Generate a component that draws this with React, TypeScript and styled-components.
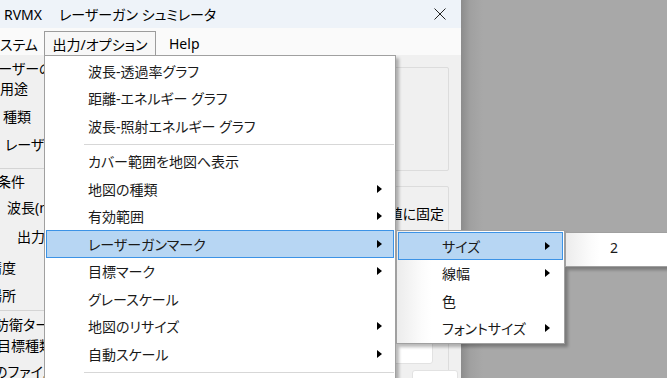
import styled, { createGlobalStyle } from "styled-components";

const GlobalStyle = createGlobalStyle`
  html, body {
    margin: 0;
    padding: 0;
  }
  body {
    font-family: "Noto Sans", "Noto Sans CJK JP", sans-serif;
    font-feature-settings: "palt";
    color: #1a1a1a;
  }
`;

const Screen = styled.div`
  position: relative;
  width: 667px;
  height: 378px;
  overflow: hidden;
  display: flex;
  background: #a8a8a8;
`;

const Window = styled.div`
  width: 461px;
  flex-shrink: 0;
  display: flex;
  flex-direction: column;
  background: #f0f0f0;
`;

const Desktop = styled.div`
  flex: 1;
  background: linear-gradient(to right, #8c8c8c 0px, #a0a0a0 9px, #a8a8a8 22px);
`;

const TitleBar = styled.div`
  height: 28px;
  display: flex;
  align-items: center;
  padding-left: 4px;
  background: #eef3f9;
  font-size: 14px;
  color: #000;
`;

const TitleText = styled.span`
  white-space: nowrap;
`;

const TitleGap = styled.span`
  display: inline-block;
  width: 17px;
`;

const CloseButton = styled.div`
  margin-left: auto;
  width: 42px;
  height: 28px;
  display: flex;
  align-items: center;
  justify-content: center;
`;

const MenuBar = styled.div`
  height: 27px;
  display: flex;
  align-items: flex-end;
  background: #fafafa;
  font-size: 14px;
`;

const MenuBarItem = styled.div<{ $open?: boolean; $shift?: number; $width?: number }>`
  height: 24px;
  width: ${(p) => (p.$width ? `${p.$width}px` : "auto")};
  flex-shrink: 0;
  display: flex;
  align-items: center;
  justify-content: ${(p) => (p.$open ? "center" : "flex-start")};
  margin-left: ${(p) => p.$shift ?? 0}px;
  white-space: nowrap;
  box-sizing: border-box;
  border: 1px solid ${(p) => (p.$open ? "#9c9c9c" : "transparent")};
  border-bottom: none;
  background: ${(p) => (p.$open ? "#f7f7f7" : "transparent")};
  color: #000;
`;

const Body = styled.div`
  flex: 1;
  display: flex;
  overflow: hidden;
  font-size: 14px;
  color: #000;
`;

const LeftCol = styled.div`
  width: 44px;
  overflow: hidden;
  display: flex;
  flex-direction: column;
`;

const Label = styled.div<{ $indent: number; $gap: number }>`
  height: 20px;
  line-height: 20px;
  margin-top: ${(p) => p.$gap}px;
  margin-left: ${(p) => p.$indent}px;
  white-space: nowrap;
`;

const Rule = styled.div<{ $gap: number }>`
  height: 1px;
  flex-shrink: 0;
  margin-top: ${(p) => p.$gap}px;
  background: #d4d4d4;
`;

const Middle = styled.div`
  flex: 1;
`;

const RightCol = styled.div`
  width: 90px;
  padding-right: 12px;
  box-sizing: border-box;
  display: flex;
  flex-direction: column;
`;

const GroupBox = styled.div<{ $gap: number; $height?: number }>`
  margin-top: ${(p) => p.$gap}px;
  height: ${(p) => (p.$height ? `${p.$height}px` : "auto")};
  flex: ${(p) => (p.$height ? "none" : 1)};
  border: 1px solid #dcdcdc;
  border-radius: 2px;
  display: flex;
  flex-direction: column;
`;

const FixText = styled.div`
  margin-top: 17px;
  height: 20px;
  line-height: 20px;
  display: flex;
  justify-content: flex-end;
  padding-right: 4px;
  white-space: nowrap;
`;

const Field = styled.div<{ $gap: number; $left: number; $right: number; $height: number }>`
  margin-top: ${(p) => p.$gap}px;
  margin-left: ${(p) => p.$left}px;
  margin-right: ${(p) => p.$right}px;
  height: ${(p) => p.$height}px;
  flex-shrink: 0;
  background: #fff;
  border: 1px solid #e2e2e2;
  border-radius: 3px;
`;

const Menu = styled.div<{ $left: number; $top: number; $width: number; $height: number; $z: number; $column?: boolean }>`
  position: absolute;
  left: ${(p) => p.$left}px;
  top: ${(p) => p.$top}px;
  width: ${(p) => p.$width}px;
  height: ${(p) => p.$height}px;
  z-index: ${(p) => p.$z};
  box-sizing: border-box;
  padding: 1px 0;
  border: 1px solid #a0a0a0;
  background: ${(p) =>
    p.$column ? "linear-gradient(to right, #ececec 0px, #fbfbfb 24px, #fff 34px)" : "#fff"};
  box-shadow: 3px 3px 3px rgba(0, 0, 0, 0.28);
  font-size: 14px;
  color: #1a1a1a;
`;

const Item = styled.div<{ $active?: boolean; $padLeft: number; $padRight: number }>`
  height: 27.5px;
  box-sizing: border-box;
  margin: 0 1px;
  display: flex;
  align-items: center;
  justify-content: space-between;
  padding: 0 ${(p) => p.$padRight}px 0 ${(p) => p.$padLeft}px;
  border: 1px solid ${(p) => (p.$active ? "#3c93e6" : "transparent")};
  background: ${(p) => (p.$active ? "#b7d6f3" : "transparent")};
  white-space: nowrap;
`;

const Arrow = styled.span`
  width: 0;
  height: 0;
  border-left: 5px solid #000;
  border-top: 4px solid transparent;
  border-bottom: 4px solid transparent;
`;

const Separator = styled.div`
  height: 1px;
  margin: 4px 1px 3px 39px;
  background: #d7d7d7;
`;

type Entry = { label: string; sub?: boolean; active?: boolean } | "sep";

const mainItems: Entry[] = [
  { label: "波長-透過率グラフ" },
  { label: "距離-エネルギー グラフ" },
  { label: "波長-照射エネルギー グラフ" },
  "sep",
  { label: "カバー範囲を地図へ表示" },
  { label: "地図の種類", sub: true },
  { label: "有効範囲", sub: true },
  { label: "レーザーガンマーク", sub: true, active: true },
  { label: "目標マーク", sub: true },
  { label: "グレースケール" },
  { label: "地図のリサイズ", sub: true },
  { label: "自動スケール", sub: true },
  "sep",
];

const markItems: Entry[] = [
  { label: "サイズ", sub: true, active: true },
  { label: "線幅", sub: true },
  { label: "色" },
  { label: "フォントサイズ", sub: true },
];

const labels = [
  { text: "レーザーの", indent: -14, gap: 4 },
  { text: "用途", indent: 0, gap: 0 },
  { text: "種類", indent: 3, gap: 8 },
  { text: "レーザー", indent: 5, gap: 8 },
  { rule: 13 },
  { text: "条件", indent: -3, gap: 3 },
  { text: "波長(nm)", indent: 7, gap: 6 },
  { text: "出力(W)", indent: 17, gap: 9 },
  { text: "精度", indent: -12, gap: 11 },
  { text: "場所", indent: -12, gap: 8 },
  { rule: 4 },
  { text: "防衛ター", indent: -5, gap: 4 },
  { text: "目標種類", indent: -3, gap: 1 },
  { text: "のファイル", indent: -6, gap: 6 },
];

function renderItems(items: Entry[], padLeft: number, padRight: number) {
  return items.map((it, i) =>
    it === "sep" ? (
      <Separator key={i} />
    ) : (
      <Item key={i} $active={it.active} $padLeft={padLeft} $padRight={padRight}>
        <span>{it.label}</span>
        {it.sub ? <Arrow /> : null}
      </Item>
    )
  );
}

function App() {
  return (
    <Screen>
      <GlobalStyle />
      <Window>
        <TitleBar>
          <TitleText>
            RVMX<TitleGap />レーザーガン シュミレータ
          </TitleText>
          <CloseButton>
            <svg width="12" height="12" viewBox="0 0 12 12">
              <path d="M0.5 0.5 L11.5 11.5 M11.5 0.5 L0.5 11.5" stroke="#222" strokeWidth="1" />
            </svg>
          </CloseButton>
        </TitleBar>
        <MenuBar>
          <MenuBarItem $shift={-14} $width={58}>システム</MenuBarItem>
          <MenuBarItem $open $width={112}>出力/オプション</MenuBarItem>
          <MenuBarItem $shift={12}>Help</MenuBarItem>
        </MenuBar>
        <Body>
          <LeftCol>
            {labels.map((l, i) =>
              "rule" in l ? (
                <Rule key={i} $gap={l.rule as number} />
              ) : (
                <Label key={i} $indent={l.indent!} $gap={l.gap!}>
                  {l.text}
                </Label>
              )
            )}
          </LeftCol>
          <Middle />
          <RightCol>
            <GroupBox $gap={12} $height={102} />
            <GroupBox $gap={15}>
              <FixText>初期値に固定</FixText>
              <Field $gap={108} $left={0} $right={15} $height={30} />
              <Field $gap={6} $left={40} $right={-10} $height={30} />
            </GroupBox>
          </RightCol>
        </Body>
      </Window>
      <Desktop />

      <Menu $left={44} $top={55} $width={352} $height={340} $z={1}>
        {renderItems(mainItems, 41, 11)}
      </Menu>
      <Menu $left={396} $top={230} $width={169} $height={114} $z={2} $column>
        {renderItems(markItems, 43, 12)}
      </Menu>
      <Menu $left={565} $top={232} $width={130} $height={35} $z={3} $column>
        {renderItems([{ label: "2" }], 42, 12)}
      </Menu>
    </Screen>
  );
}

export default App;
